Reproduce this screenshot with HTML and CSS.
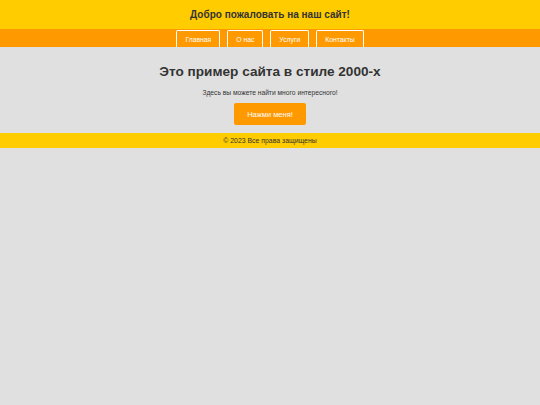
FILE: index.html
```html
<!DOCTYPE html>
<html lang="ru">
<head>
<meta charset="utf-8">
<title>Сайт</title>
<link rel="stylesheet" href="styles.css">
</head>
<body>
<header class="site-header">
  <h1 class="site-title">Добро пожаловать на наш сайт!</h1>
</header>
<nav class="site-nav">
  <a class="nav-link" href="#">Главная</a>
  <a class="nav-link" href="#">О нас</a>
  <a class="nav-link" href="#">Услуги</a>
  <a class="nav-link" href="#">Контакты</a>
</nav>
<main class="content">
  <h2 class="content-title">Это пример сайта в стиле 2000-х</h2>
  <p class="content-text">Здесь вы можете найти много интересного!</p>
  <button class="action-btn" type="button">Нажми меня!</button>
</main>
<footer class="site-footer">© 2023 Все права защищены</footer>
</body>
</html>
```

FILE: styles.css
```css
html, body {
  margin: 0;
  padding: 0;
}
body {
  background: #e0e0e0;
  font-family: "Liberation Sans", Arial, sans-serif;
  color: #333;
}
.site-header {
  background: #ffcc00;
  height: 29px;
  display: flex;
  align-items: center;
  justify-content: center;
}
.site-title {
  margin: 0;
  font-size: 10px;
  font-weight: bold;
  color: #333;
}
.site-nav {
  background: #ff9900;
  height: 18px;
  display: flex;
  justify-content: center;
  align-items: flex-end;
  gap: 7px;
}
.nav-link {
  box-sizing: border-box;
  height: 17px;
  padding: 0 8px;
  display: flex;
  align-items: center;
  border: 1px solid #fff;
  border-bottom: none;
  border-radius: 2px 2px 0 0;
  color: #fff;
  font-size: 6.8px;
  text-decoration: none;
}
.content {
  display: flex;
  flex-direction: column;
  align-items: center;
  padding: 18px 0 8px;
}
.content-title {
  margin: 0;
  font-size: 13.6px;
  font-weight: bold;
  color: #333;
  line-height: 14px;
}
.content-text {
  margin: 10px 0 0;
  font-size: 6.7px;
  line-height: 8px;
  color: #333;
}
.action-btn {
  margin-top: 6px;
  width: 72px;
  height: 22px;
  border: none;
  border-radius: 2px;
  background: #ff9900;
  color: #fff;
  font-family: "Liberation Sans", Arial, sans-serif;
  font-size: 7.5px;
  padding: 0;
}
.site-footer {
  background: #ffcc00;
  height: 15px;
  display: flex;
  align-items: center;
  justify-content: center;
  font-size: 6.9px;
  color: #333;
}
```
